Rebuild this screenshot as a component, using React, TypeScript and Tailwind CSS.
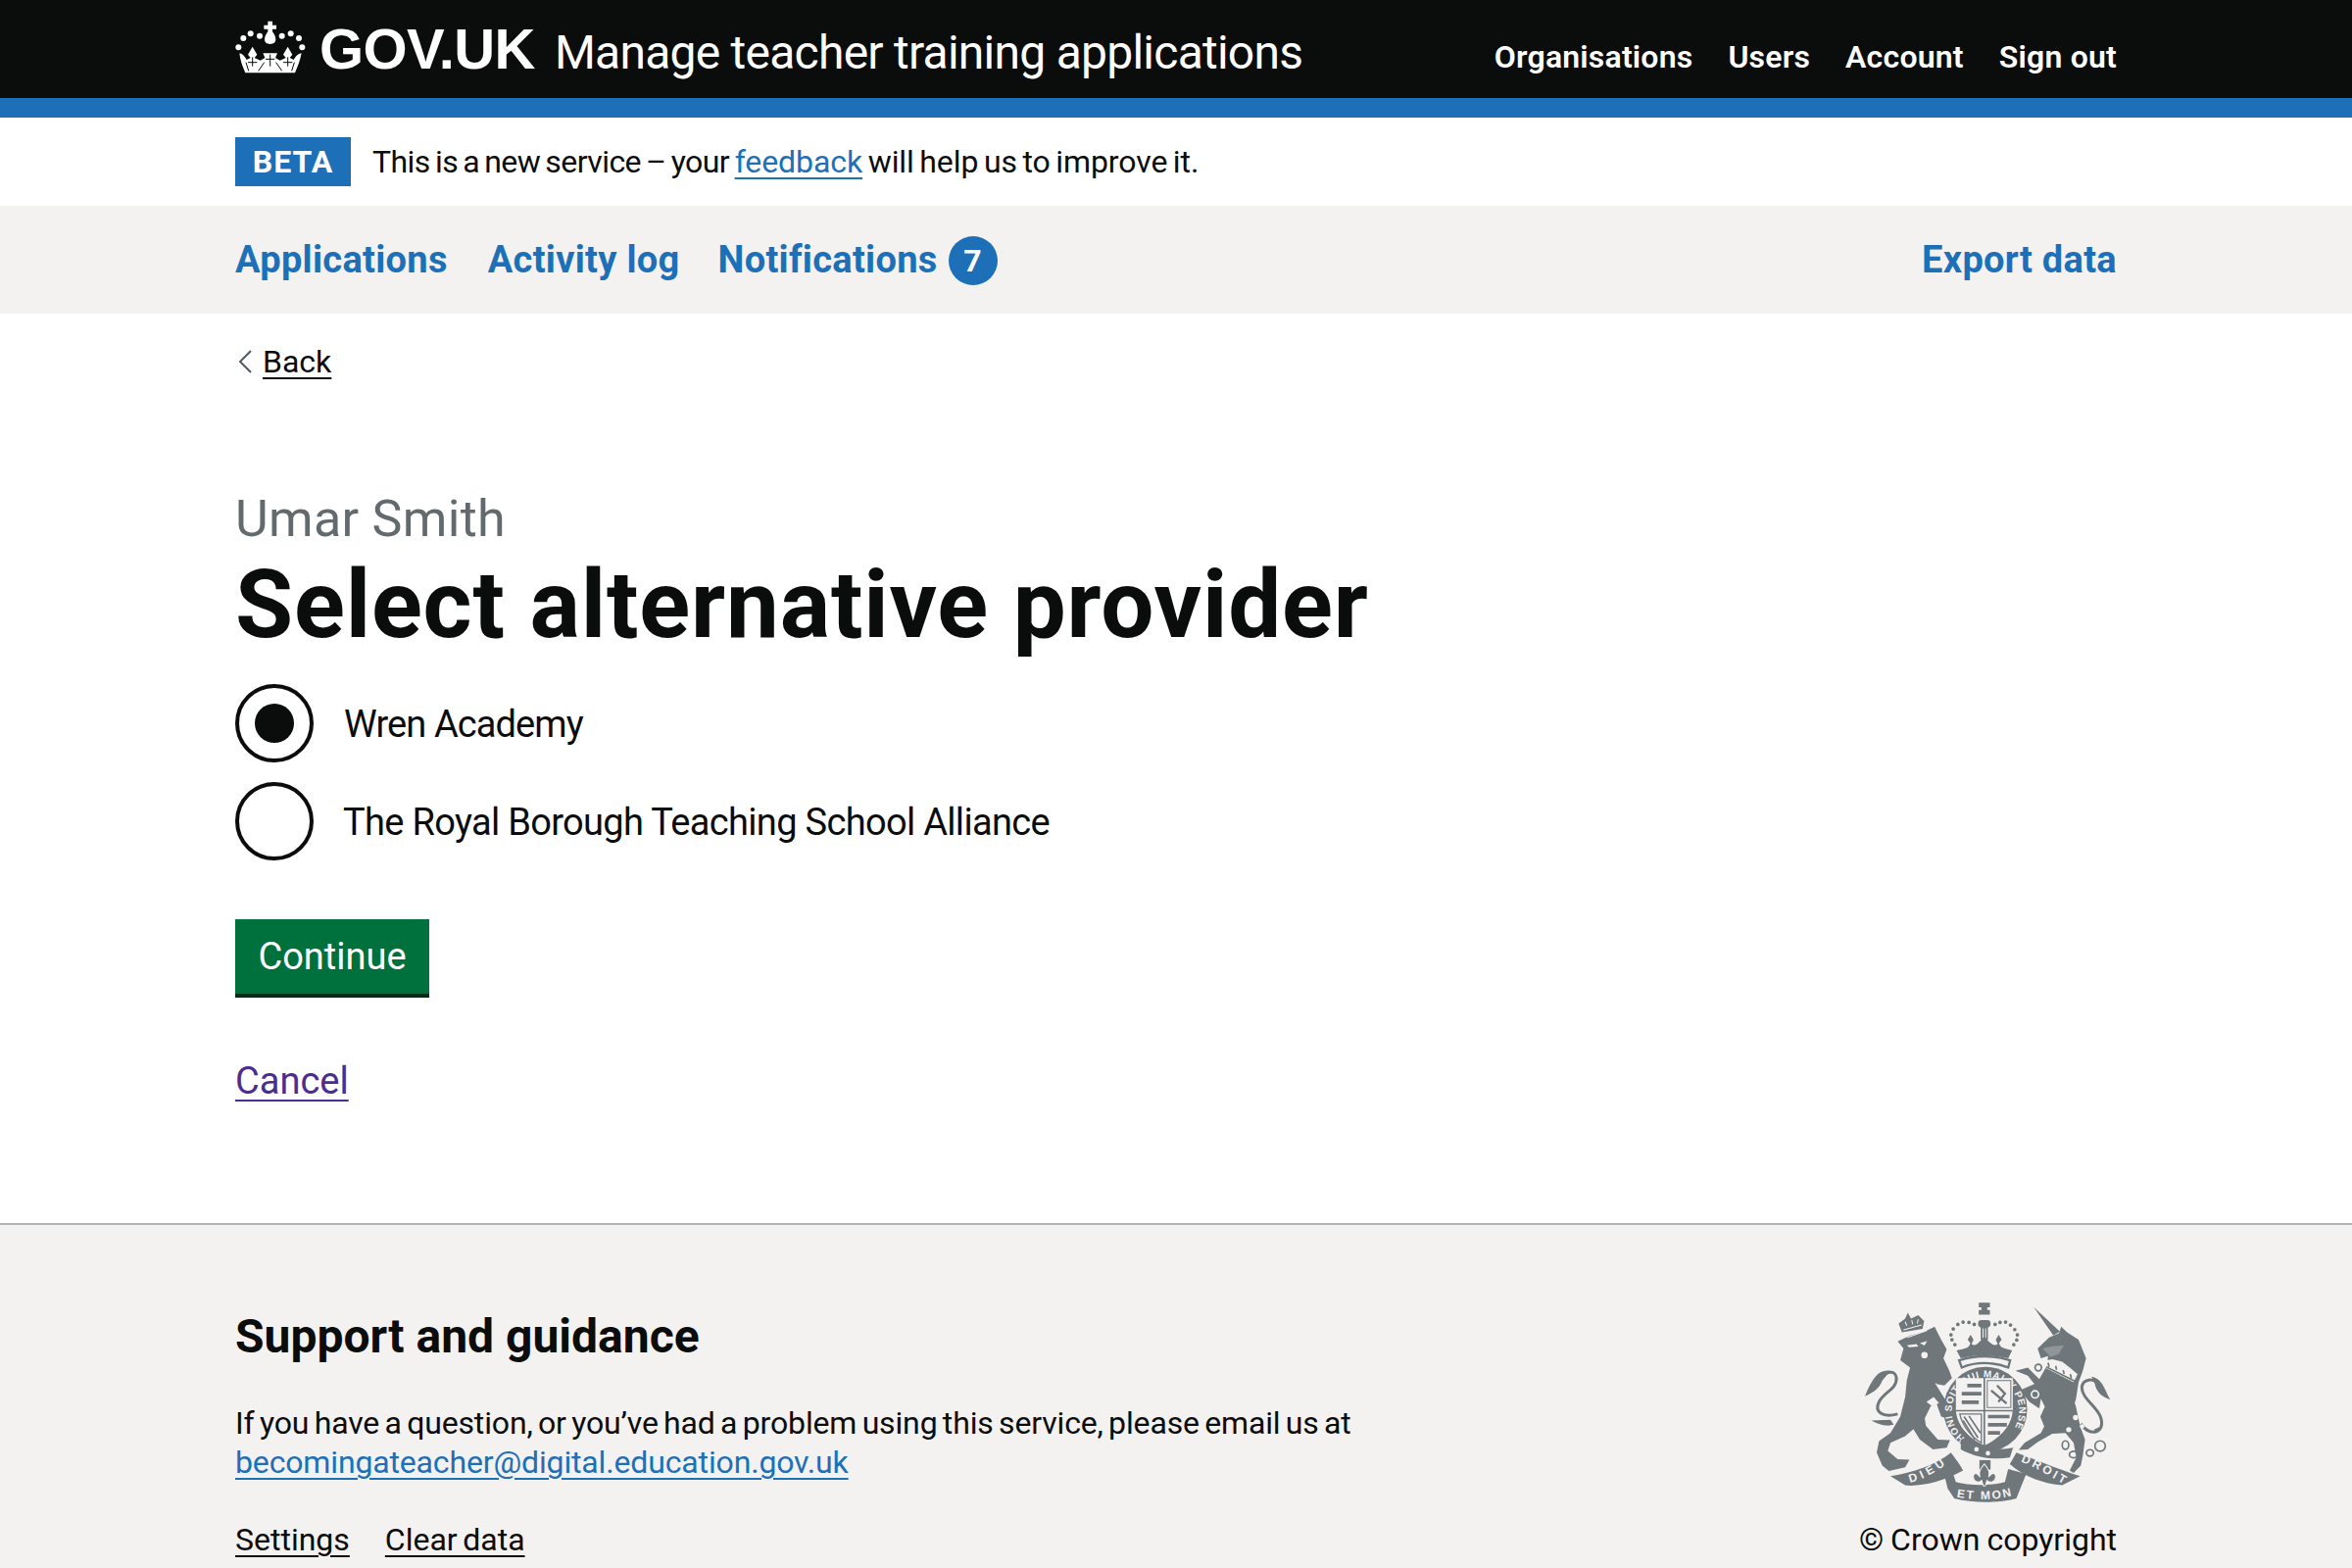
function GovCrown() {
  const dots = [
    [40, 72],
    [62, 58],
    [90, 65],
    [158, 65],
    [185, 58],
    [210, 72],
    [25, 100],
    [220, 100],
  ];
  return (
    <svg viewBox="0 0 255 195" className="w-[85px] h-[65px] -ml-[5px] -mt-[7px] shrink-0" fill="white">
      {dots.map(([x, y]) => (
        <circle key={`${x}-${y}`} cx={x} cy={y} r="9" />
      ))}
      <path d="M115 20h14v12h12v12h-12v8c6 8 10 16 10 24 0 9-7 14-17 14s-17-5-17-14c0-8 4-16 10-24v-8h-12v-12h12z" />
      <path d="M28 118 C38 120 44 128 50 138 L62 132 L54 122 L68 98 L82 122 L74 132 L92 140 L106 132 L100 118 H144 L138 132 L152 140 L170 132 L162 122 L176 98 L190 122 L182 132 L194 138 C200 128 206 120 218 118 C214 140 206 160 198 178 H46 C38 160 30 140 28 118 Z" />
      <path
        d="M56 172 L48 146 M68 130 V158 M54 146 H82 M86 172 L104 146 M122 122 V158 M108 136 H136 M158 172 L140 146 M176 130 V158 M162 146 H190 M188 172 L196 146"
        stroke="#0b0c0c"
        strokeWidth="3"
        fill="none"
      />
    </svg>
  );
}

function Crest() {
  const grey = "#6f777b";
  const bg = "#f3f2f1";
  const lion =
    "M262 210 L300 192 L345 180 L375 165 L395 205 L412 235 L402 262 L420 300 L428 322 L405 345 L380 340 L412 395 L432 428 L422 448 L395 440 L378 392 L362 410 L345 445 L348 468 L385 510 L422 512 L412 535 L370 540 L330 510 L310 478 L285 500 L240 520 L232 545 L262 570 L298 572 L285 595 L235 606 L215 590 L198 550 L205 515 L240 490 L270 440 L285 380 L290 330 L300 290 L270 268 L280 232 Z";
  const unicorn =
    "M690 232 L725 198 L755 185 L762 165 L780 182 L815 205 L838 262 L828 300 L815 335 L805 400 L820 470 L835 510 L828 560 L822 590 L800 612 L788 605 L808 565 L800 520 L775 490 L735 492 L690 518 L660 540 L632 542 L650 520 L700 490 L710 470 L698 440 L712 410 L700 385 L695 415 L665 395 L635 360 L680 340 L660 315 L622 300 L660 290 L695 325 L718 285 L722 255 L700 262 Z";
  return (
    <svg viewBox="150 85 770 620" className="w-[257px] h-[207px] block" fill={grey}>
      {/* lion */}
      <path d={lion} />
      <path d="M292 198 L352 176" stroke={bg} strokeWidth="3" fill="none" />
      <circle cx="344" cy="252" r="10" fill={bg} />
      <path d="M290 222 l30 -4 l5 8 l-28 2 z M330 215 l22 -6 l-8 14 z" fill={bg} />
      <path d="M378 338 L410 388" stroke={bg} strokeWidth="3" fill="none" />
      <path d="M350 395 L372 380 L388 398 L370 410 Z" fill={bg} />
      <path d="M262 432 C215 445 190 425 205 395 C220 365 262 355 258 320 C255 298 225 298 205 330" stroke={grey} strokeWidth="9" fill="none" />
      <path d="M240 300 C205 295 185 320 162 378 C190 365 205 355 215 330 Z" />
      <path d="M182 452 C200 462 225 472 250 465 L240 450 Z" />
      {/* lion crown */}
      <path d="M275 182 L265 155 L285 140 L293 122 L303 140 L325 130 L343 148 L338 172 Z" />
      <path d="M280 175 L335 160 M285 150 L290 162 M305 145 L308 158 M325 142 L322 155" stroke={bg} strokeWidth="3" fill="none" />
      {/* unicorn */}
      <path d={unicorn} />
      <path d="M678 105 L758 180 L738 192 Z" />
      <path d="M718 268 L712 290 L800 335 L812 310 L790 292 L765 272 L735 265 Z" fill={bg} />
      <path d="M722 275 L725 288 M745 285 L748 297 M768 298 L771 310 M790 310 L793 323 M716 288 L806 333" stroke={grey} strokeWidth="5" fill="none" />
      <path d="M705 232 L735 225 L770 222 L755 248 L730 258 Z" fill={bg} opacity="0.25" />
      <path d="M822 462 C850 505 900 490 882 440 C868 405 825 385 825 350 C828 325 860 318 880 345" stroke={grey} strokeWidth="9" fill="none" />
      <path d="M855 318 C890 325 895 360 912 388 C885 378 870 365 865 340 Z" />
      <path d="M862 480 L888 468 L870 490 Z" />
      <g fill="none" stroke={grey} strokeWidth="5">
        <circle cx="692" cy="290" r="10" />
        <circle cx="682" cy="372" r="11" stroke={bg} />
        <ellipse cx="775" cy="527" rx="10" ry="13" />
        <ellipse cx="800" cy="556" rx="13" ry="10" />
        <ellipse cx="850" cy="551" rx="11" ry="10" />
        <circle cx="881" cy="530" r="16" />
      </g>
      <g fill={bg}>
        <ellipse cx="816" cy="398" rx="12" ry="11" />
        <circle cx="806" cy="443" r="8" />
        <circle cx="785" cy="480" r="8" />
        <circle cx="826" cy="470" r="7" />
      </g>
      {/* royal crown */}
      <path d="M510 92 h34 v14 l-8 0 v8 h8 v14 h-34 v-14 h8 v-8 h-8 z" />
      <rect x="508" y="145" width="38" height="22" rx="10" />
      <rect x="516" y="165" width="22" height="40" />
      <path d="M523 170 v30 M531 170 v30" stroke={bg} strokeWidth="3" />
      <g>
        {[
          [428, 205], [425, 190], [432, 172], [446, 158], [462, 151], [480, 152], [496, 158],
          [560, 158], [575, 152], [592, 151], [607, 160], [620, 174], [628, 190], [626, 206],
          [437, 220], [617, 220],
        ].map(([x, y]) => (
          <circle key={`${x}-${y}`} cx={x} cy={y} r="5.500" />
        ))}
      </g>
      <path d="M442 238 C470 230 480 232 484 215 L476 205 L485 190 L494 205 L488 218 C498 228 510 215 527 195 C544 215 556 228 568 218 L562 205 L571 190 L580 205 L572 215 C576 232 590 230 612 238 L600 262 C550 250 500 250 455 262 Z" />
      <path d="M450 268 C500 252 555 252 606 268 L600 290 C555 272 500 272 458 290 Z" fill="none" stroke={grey} strokeWidth="7" />
      {/* garter */}
      <ellipse cx="530" cy="418" rx="128" ry="130" />
      <defs>
        <path id="garter" d="M468 505 A103 103 0 1 1 602 497" />
      </defs>
      <text fill={bg} fontFamily="'Liberation Sans', sans-serif" fontSize="30" fontWeight="700">
        <textPath href="#garter" textLength="470">HONI SOIT QUI MAL Y PENSE</textPath>
      </text>
      {/* shield */}
      <path d="M440 322 H614 V420 C612 470 570 510 527 528 C485 510 442 470 440 420 Z" fill={bg} />
      <path d="M527 320 V528 M440 422 H614" stroke={grey} strokeWidth="5" />
      <g stroke={grey} strokeWidth="11" fill="none">
        <path d="M475 345 H518 M458 370 H518 M458 396 H510" />
        <path d="M538 440 H604 M538 465 H596 M538 490 H575" />
        <path d="M566 345 L590 370 L570 395 M548 360 L595 400" strokeWidth="7" />
        <path d="M536 330 H608 V412 H536 Z" strokeWidth="3" />
      </g>
      <path d="M452 432 H518 V520 C490 505 460 470 452 432 Z" fill="none" stroke={grey} strokeWidth="4" />
      <path d="M465 440 L508 505 M480 438 L515 490 M462 452 L498 510" stroke={grey} strokeWidth="5" />
      {/* buckle band */}
      <path d="M455 510 L480 500 C520 535 560 545 615 535 L605 565 C545 575 490 560 455 540 Z" />
      <circle cx="503" cy="540" r="7" fill={bg} />
      <circle cx="538" cy="552" r="7" fill={bg} />
      {/* motto ribbons */}
      <path d="M240 622 C310 610 375 590 425 550 C440 570 455 590 462 605 C400 640 330 655 285 650 Z" />
      <path d="M400 600 L415 660 L435 690 C495 705 570 705 625 690 L655 615 L600 600 L590 640 C550 652 480 652 440 640 L425 595 Z" />
      <path d="M605 585 L625 550 C680 570 750 600 820 622 L765 650 C710 645 650 625 605 585 Z" />
      <defs>
        <path id="ribbon-l" d="M300 642 C340 632 375 612 410 585" />
        <path id="ribbon-c" d="M442 686 C500 696 560 696 612 682" />
        <path id="ribbon-r" d="M638 578 C680 592 725 622 768 645" />
      </defs>
      <g fill={bg} fontFamily="'Liberation Sans', sans-serif" fontWeight="700" fontSize="36">
        <text><textPath href="#ribbon-l" textLength="122">DIEU</textPath></text>
        <text><textPath href="#ribbon-c" textLength="170">ET MON</textPath></text>
        <text><textPath href="#ribbon-r" textLength="148">DROIT</textPath></text>
      </g>
      {/* fleur de lis */}
      <path d="M512 573 H546 V602 H512 Z" />
      <path d="M527 585 C540 600 545 610 540 625 C555 605 565 615 560 632 C552 645 540 640 535 635 L530 652 H524 L519 635 C514 640 502 645 495 632 C490 615 500 605 514 625 C509 610 514 600 527 585 Z" stroke={bg} strokeWidth="3" />
    </svg>
  );
}

export default function App() {
  return (
    <div className="min-h-screen bg-white font-['Roboto',sans-serif] text-[#0b0c0c]">
      {/* Header */}
      <header className="bg-[#0b0c0c] border-b-[20px] border-[#1d70b8] text-white">
        <div className="w-[1920px] mx-auto h-[100px] flex items-start">
          <div className="flex items-start pt-[22px]">
            <GovCrown />
          </div>
          <a className="ml-[6px] mt-[15px] text-[58px] leading-[70px] font-bold font-['Liberation_Sans',sans-serif] tracking-[-0.6px]">
            GOV.UK
          </a>
          <span className="ml-[20px] mt-[26px] text-[48px] leading-[56px] tracking-[-0.75px]">
            Manage teacher training applications
          </span>
          <nav className="ml-auto mt-[38px] flex gap-[36px] text-[32px] leading-[40px] font-semibold tracking-[0.2px]">
            <a>Organisations</a>
            <a>Users</a>
            <a>Account</a>
            <a>Sign out</a>
          </nav>
        </div>
      </header>

      {/* Beta banner */}
      <div className="w-[1920px] mx-auto h-[90px] flex items-center">
        <strong className="bg-[#1d70b8] text-white text-[32px] leading-[50px] h-[50px] w-[118px] text-center font-bold tracking-[1px]">
          BETA
        </strong>
        <p className="ml-[22px] text-[32px] leading-[40px] tracking-[-0.08px] [word-spacing:-2.3px]">
          <span className="tracking-[-0.55px]">This is a new service – your</span>{" "}
          <a className="text-[#1d70b8] underline underline-offset-[5px] decoration-2">feedback</a> will help us to
          improve it.
        </p>
      </div>

      {/* Primary nav */}
      <div className="bg-[#f3f2f1] h-[110px]">
        <div className="w-[1920px] mx-auto h-full flex items-center text-[38px] leading-[50px] font-bold text-[#1d70b8] tracking-[0.3px]">
          <a>Applications</a>
          <a className="ml-[41px]">Activity log</a>
          <a className="ml-[39px]">Notifications</a>
          <span className="ml-[11px] mt-[1px] w-[50px] h-[50px] rounded-full bg-[#1d70b8] text-white text-[32px] flex items-center justify-center">
            7
          </span>
          <a className="ml-auto">Export data</a>
        </div>
      </div>

      {/* Main */}
      <main className="w-[1920px] mx-auto">
        <div className="mt-[29px] flex items-center h-[40px] text-[32px] leading-[40px]">
          <svg viewBox="0 0 14 24" className="w-[14px] h-[24px] ml-[3px] shrink-0" fill="none" stroke="#505a5f" strokeWidth="2">
            <polyline points="13,1 2,12 13,23" />
          </svg>
          <a className="ml-[11px] underline underline-offset-[5px] decoration-2">Back</a>
        </div>

        <p className="mt-[113px] text-[52px] leading-[56px] text-[#626a6e] tracking-[0.3px]">Umar Smith</p>
        <h1 className="mt-[9px] text-[96px] leading-[100px] font-bold tracking-[0.85px]">Select alternative provider</h1>

        <div className="mt-[31px] flex flex-col gap-[20px]">
          <label className="flex items-center h-[80px]">
            <span className="w-[80px] h-[80px] rounded-full border-4 border-[#0b0c0c] flex items-center justify-center shrink-0">
              <span className="w-[40px] h-[40px] rounded-full bg-[#0b0c0c]" />
            </span>
            <span className="ml-[31px] mt-[1px] text-[38px] leading-[50px] tracking-[-0.9px]">Wren Academy</span>
          </label>
          <label className="flex items-center h-[80px]">
            <span className="w-[80px] h-[80px] rounded-full border-4 border-[#0b0c0c] shrink-0" />
            <span className="ml-[30px] mt-[1px] text-[38px] leading-[50px] tracking-[-0.68px]">
              The Royal Borough Teaching School Alliance
            </span>
          </label>
        </div>

        <button className="mt-[60px] block w-[198px] h-[80px] bg-[#00703c] border-b-4 border-[#002d18] text-white text-[38px] leading-[50px]">
          Continue
        </button>

        <a className="mt-[60px] block w-fit text-[38px] leading-[50px] text-[#4c2c92] underline underline-offset-[6px] decoration-2">
          Cancel
        </a>
      </main>

      {/* Footer */}
      <footer className="mt-[120px] bg-[#f3f2f1] border-t-2 border-[#b1b4b6]">
        <div className="w-[1920px] mx-auto pt-[84px] pb-[50px] flex justify-between items-start">
          <div>
            <h2 className="text-[48px] leading-[60px] font-bold">Support and guidance</h2>
            <p className="mt-[38px] text-[32px] leading-[40px] tracking-[-0.15px] [word-spacing:-2.4px]">
              If you have a question, or you’ve had a problem using this service, please email us at
              <br />
              <a className="text-[#1d70b8] underline underline-offset-[5px] decoration-2">
                becomingateacher@digital.education.gov.uk
              </a>
            </p>
            <div className="mt-[39px] flex gap-[36px] text-[32px] leading-[40px] [word-spacing:-2.4px]">
              <a className="underline underline-offset-[5px] decoration-2">Settings</a>
              <a className="underline underline-offset-[5px] decoration-2">Clear data</a>
            </div>
          </div>
          <div className="flex flex-col items-end">
            <div className="-mr-[-4px] -mt-[7px]">
              <Crest />
            </div>
            <p className="mt-[17px] text-[32px] leading-[40px] [word-spacing:-1px]">
              © Crown copyright
            </p>
          </div>
        </div>
      </footer>
    </div>
  );
}
